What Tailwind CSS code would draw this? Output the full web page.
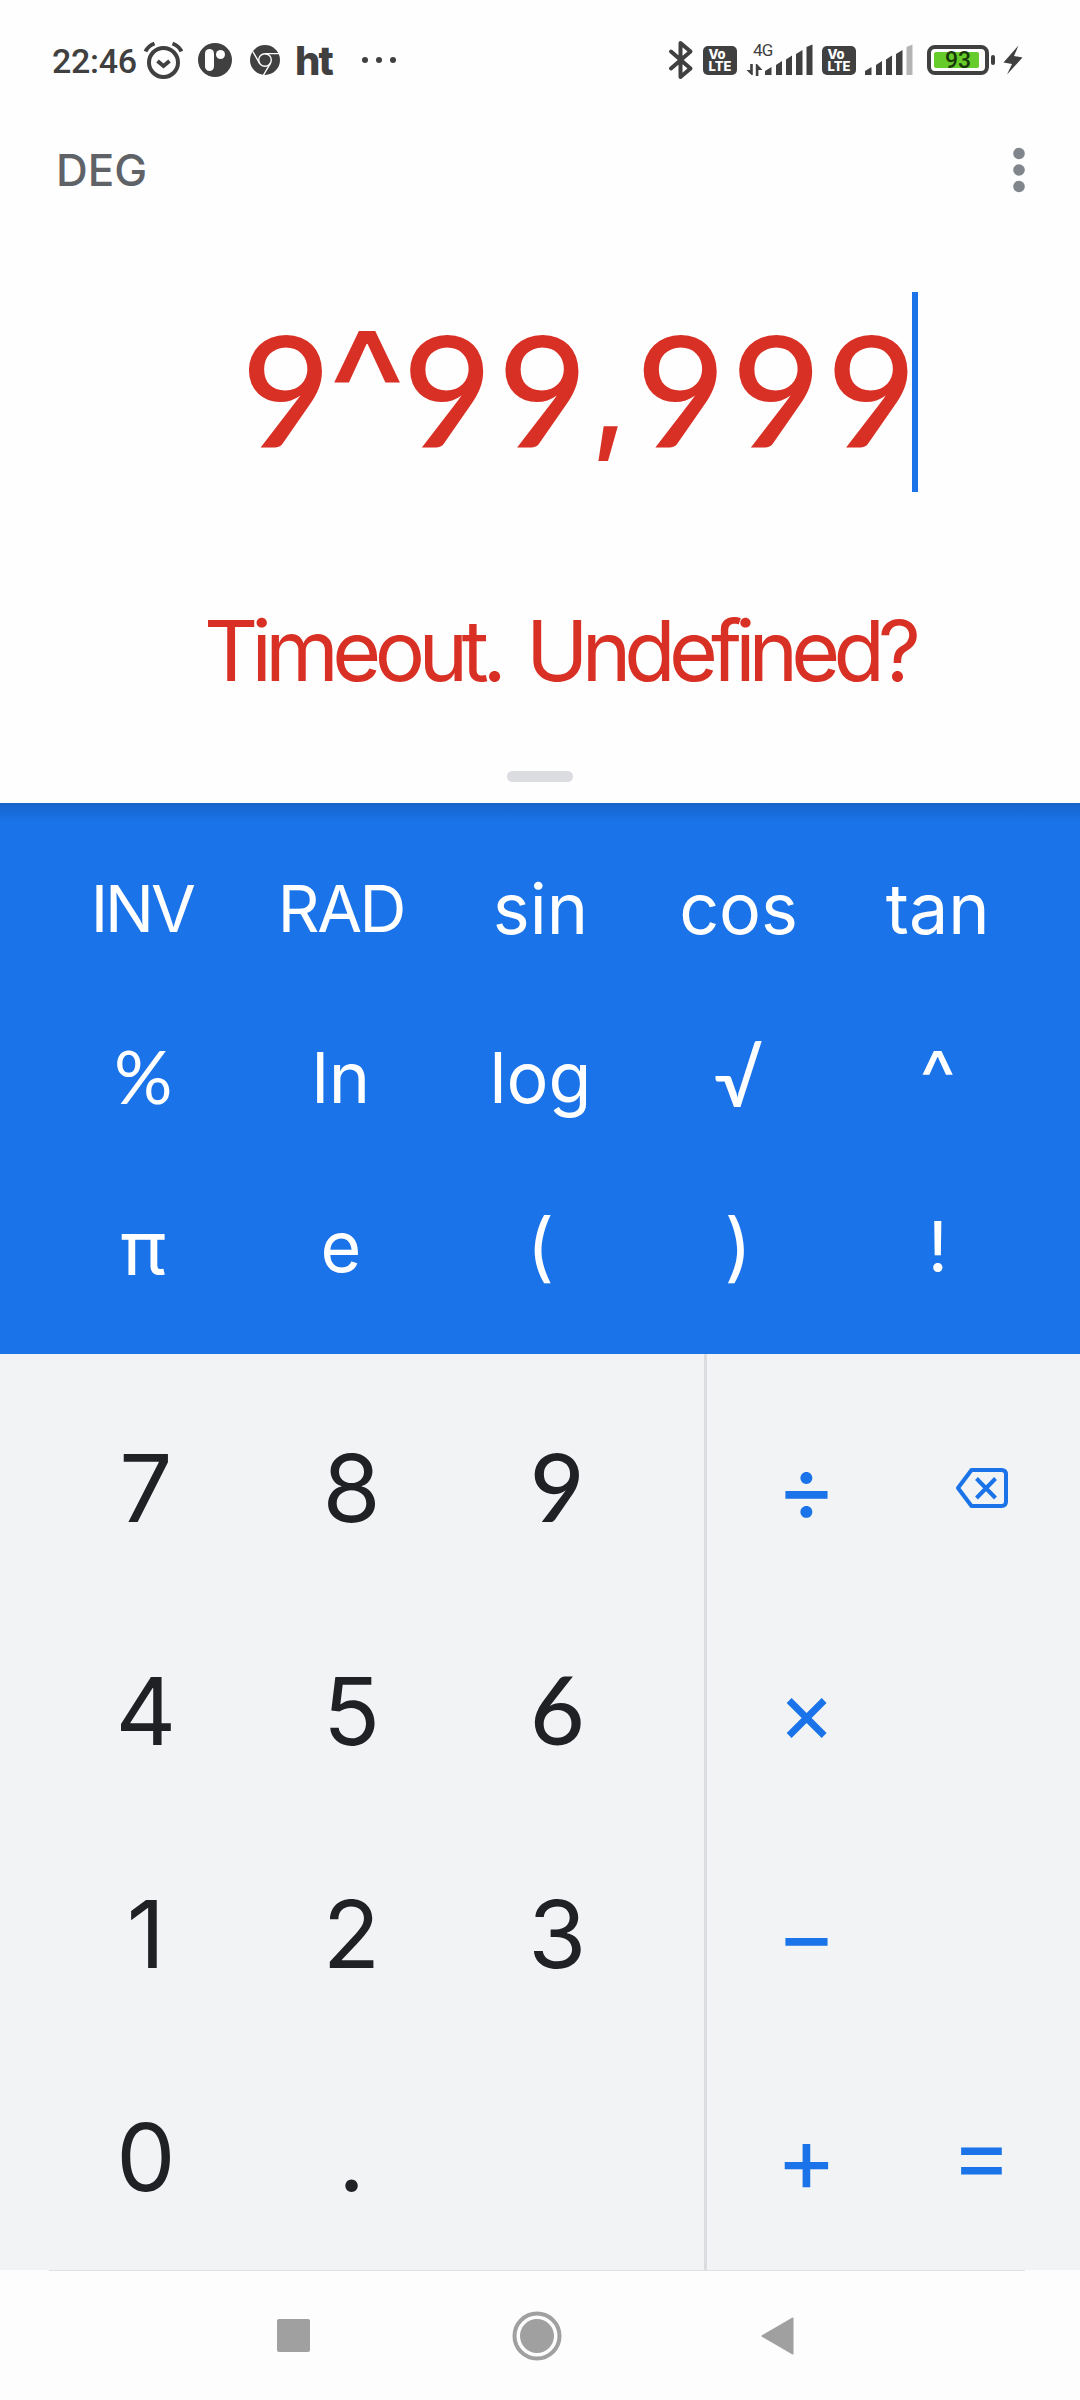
<!DOCTYPE html>
<html lang="en">
<head>
<meta charset="utf-8">
<title>Calculator</title>
<script src="https://cdn.jsdelivr.net/npm/@tailwindcss/browser@4"></script>
</head>
<body class="flex h-[2400px] w-[1080px] flex-col overflow-hidden bg-[#fefefe] font-['Inter',sans-serif] text-[#202124]">

<!-- Status bar -->
<header class="flex h-[120px] items-center justify-between pr-[57px] pl-[52px] text-[#404040]">
  <div class="flex items-center">
    <span class="w-[91px] pt-[2px] font-['Roboto',sans-serif] text-[34px] leading-[44px] font-medium tracking-[-0.3px] whitespace-nowrap">22:46</span>
    <svg class="h-[38px] w-[40px]" viewBox="0 0 40 38" fill="none" stroke="currentColor">
      <circle cx="20.5" cy="21.5" r="14.5" stroke-width="4"/>
      <path d="M14.5 20 L20.5 25 L26.500 20" stroke-width="4"/>
      <path d="M2.500 10.500 Q5 5 11.500 2.500 M38.500 10.500 Q36 5 29.500 2.500" stroke-width="4"/>
    </svg>
    <svg class="ml-[15px] h-[34px] w-[34px]" viewBox="0 0 34 34">
      <circle cx="17" cy="17" r="17" fill="currentColor"/>
      <rect x="7" y="6" width="9" height="22" rx="4.500" fill="#fefefe"/>
      <circle cx="22.500" cy="11.500" r="4.500" fill="#fefefe"/>
    </svg>
    <svg class="ml-[18px] h-[30px] w-[30px]" viewBox="0 0 30 30">
      <circle cx="15" cy="15" r="15" fill="currentColor"/>
      <g fill="none" stroke="#fefefe" stroke-width="1.400">
        <circle cx="15" cy="15" r="6.300"/>
        <path d="M15 8.600 H29 M9.500 18.200 L2.800 6.500 M20.500 18.200 L13.500 30"/>
      </g>
    </svg>
    <span class="ml-[15px] w-[40px] pt-[2px] text-[40px] leading-[44px] font-extrabold tracking-[-1.8px]">ht</span>
    <svg class="ml-[27px] h-[6px] w-[34px]" viewBox="0 0 34 6" fill="currentColor">
      <circle cx="3" cy="3" r="3"/><circle cx="17" cy="3" r="3"/><circle cx="31" cy="3" r="3"/>
    </svg>
  </div>
  <div class="flex items-center">
    <svg class="h-[40px] w-[26px]" viewBox="0 0 26 40" fill="none" stroke="currentColor" stroke-width="4" stroke-linejoin="round" stroke-linecap="round">
      <path d="M3 11.500 L22.500 28.500 L12.500 37 V3 L22.500 11.500 L3 28.500"/>
    </svg>
    <div class="ml-[9px] flex h-[29px] w-[34px] flex-col items-center justify-center rounded-[5px] bg-[#404040] text-[13px] leading-[12px] font-extrabold text-white">
      <span class="-ml-[6px]">Vo</span><span>LTE</span>
    </div>
    <div class="ml-[9px] flex h-[36px] w-[28px] flex-col items-end">
      <span class="h-[22px] w-[21px] font-['Roboto',sans-serif] text-[17px] leading-[17px] tracking-[-0.8px]">4G</span>
      <svg class="mr-[11px] h-[12px] w-[17px]" viewBox="0 0 17 12" fill="currentColor">
        <path d="M4.200 0 H6.800 V11 H5.500 L0.500 6 H4.200Z M9.800 12 H12.400 V6 H16.500 L11 0 H9.800Z"/>
      </svg>
    </div>
    <svg class="-ml-[9px] h-[32px] w-[48px]" viewBox="0 0 48 32" fill="currentColor">
      <path d="M0 31 V27 L6.500 23 V31Z M11 31 V21 L17 17 V31Z M21 31 V15.500 L27 11.500 V31Z M31 31 V10 L37.500 6 V31Z M41.500 31 V3 L47.500 0.500 V31Z"/>
    </svg>
    <div class="ml-[9px] flex h-[29px] w-[34px] flex-col items-center justify-center rounded-[5px] bg-[#404040] text-[13px] leading-[12px] font-extrabold text-white">
      <span class="-ml-[6px]">Vo</span><span>LTE</span>
    </div>
    <svg class="ml-[9px] h-[32px] w-[48px]" viewBox="0 0 48 32" fill="currentColor">
      <path d="M0 31 V27 L6.500 23 V31Z M11 31 V21 L17 17 V31Z M21 31 V15.500 L27 11.500 V31Z M31 31 V10 L37.500 6 V31Z"/>
      <path d="M41.500 31 V3 L47.500 0.500 V31Z" fill="#b4b4b4"/>
    </svg>
    <div class="ml-[14px] flex h-[30px] w-[62px] items-center rounded-[8px] border-[4px] border-[#404040] pl-[3px]">
      <span class="flex h-[16px] w-[45px] items-center justify-center rounded-[2px] bg-[#66cc2b] pt-[2px] pl-[3px] font-['Roboto',sans-serif] text-[23px] leading-[16px] font-medium text-[#183808]">93</span>
    </div>
    <span class="ml-[2px] h-[10px] w-[4px] rounded-[2px] bg-[#404040]"></span>
    <svg class="ml-[8px] h-[30px] w-[20px]" viewBox="0 0 20 30" fill="currentColor"><path d="M15.500 0.500 L0.500 17.500 L9 19 L4 29.500 L19.500 12.500 L11 11Z"/></svg>
  </div>
</header>

<!-- Display -->
<main class="flex h-[683px] flex-col">
  <div class="flex h-[98px] items-center justify-between pr-[55px] pl-[56px] pt-[1px]">
    <span class="text-[44px] font-medium text-[#5f6368]">DEG</span>
    <svg class="h-[46px] w-[12px]" viewBox="0 0 12 46" fill="#80868b"><circle cx="6" cy="6.500" r="5.800"/><circle cx="6" cy="23" r="5.800"/><circle cx="6" cy="39.500" r="5.800"/></svg>
  </div>
  <div class="mt-[74px] flex h-[200px] items-center justify-end pr-[162px] text-[#d93025]">
    <div class="flex items-baseline pt-[5px] font-['Lato',sans-serif] text-[155px] leading-[180px] font-medium tracking-[5.4px]">
      <span>9</span><span class="flex w-[66px] justify-center font-['Inter',sans-serif] text-[168px] font-normal tracking-normal"><span class="-ml-[5px] translate-y-[2px]">^</span></span><span>99</span><span class="flex w-[43px] -translate-y-[8px] justify-center pr-[10px] font-['Inter',sans-serif] text-[122px] font-medium tracking-normal">,</span><span>999</span>
    </div>
    <span class="-ml-[10px] h-[200px] w-[6px] bg-[#1a73e8]"></span>
  </div>
  <div class="mt-[109px] flex h-[100px] items-center justify-end gap-[26px] pr-[166px] text-[84px] whitespace-nowrap text-[#d93025]"><span class="tracking-[-6.600px]">Timeout.</span><span class="tracking-[-6.900px]">Undefined?</span></div>
  <div class="mx-auto mt-[70px] h-[11px] w-[66px] rounded-full bg-[#dadce0]"></div>
</main>

<!-- Scientific keys -->
<section class="h-[551px] shrink-0 bg-[#1a73e8] bg-linear-to-b from-[#1664cb] to-[#1a73e8] to-[18px] pt-[21px] text-white">
  <div class="ml-[44px] grid w-[993px] grid-cols-5 grid-rows-[repeat(3,169px)] place-items-center text-[70px]">
    <span class="pr-[3px] text-[65px] tracking-[-3px]">INV</span><span class="pr-[2px] text-[65px] tracking-[-2.500px]">RAD</span><span>sin</span><span class="pr-[1px]">cos</span><span>tan</span>
    <span class="pb-[2px] font-['Lato',sans-serif] text-[73px]">%</span><span class="pr-[2px]">ln</span><span>log</span><span class="pr-[2px] font-['Lato',sans-serif] text-[77px] font-medium">√</span><span class="text-[77px]">^</span>
    <span class="text-[76px]">π</span><span class="pr-[2px]">e</span><span class="text-[75px]">(</span><span class="pr-[2px] text-[75px]">)</span><span>!</span>
  </div>
</section>

<!-- Number pad and operators -->
<section class="flex h-[916px] shrink-0 bg-[#f1f3f4]">
  <div class="ml-[43px] grid w-[617px] grid-cols-3 grid-rows-[repeat(4,223px)] place-items-center pt-[23px] text-[94px]">
    <span>7</span><span>8</span><span class="pb-[6px] font-['Lato',sans-serif] font-medium">9</span>
    <span>4</span><span>5</span><span class="pb-[6px] font-['Lato',sans-serif] font-medium">6</span>
    <span>1</span><span>2</span><span>3</span>
    <span>0</span><span>.</span>
  </div>
  <div class="ml-[44px] w-[3px] bg-[#dadce0]"></div>
  <div class="ml-[12px] grid w-[350px] grid-cols-2 grid-rows-[repeat(4,223px)] place-items-center pt-[23px] text-[92px] text-[#1a73e8]">
    <span class="pb-[2px]">÷</span>
    <svg class="mb-[2px] h-[42px] w-[54px]" viewBox="0 0 54 42" fill="none" stroke="currentColor" stroke-width="4">
      <path d="M16.500 3 H46.500 Q51 3 51 7.500 V34.500 Q51 39 46.500 39 H16.500 L3 21Z" stroke-linejoin="round"/>
      <path d="M21.500 11.500 L40.500 31 M40.500 11.500 L21.500 31"/>
    </svg>
    <span class="pt-[2px] text-[87px]">×</span><span></span>
    <span>−</span><span></span>
    <span class="pt-[2px]">+</span><span class="pb-[8px]">=</span>
  </div>
</section>

<!-- Navigation bar -->
<nav class="flex grow flex-col bg-[#fdfdfd]">
  <div class="ml-[49px] h-[1px] w-[976px] bg-[#dfe1e3]"></div>
  <div class="flex grow items-center pl-[277px] text-[#a0a0a0]">
    <span class="h-[33px] w-[33px] rounded-[2px] bg-[#a0a0a0]"></span>
    <svg class="ml-[202px] h-[50px] w-[50px]" viewBox="0 0 50 50"><circle cx="25" cy="25" r="22.500" fill="none" stroke="currentColor" stroke-width="4"/><circle cx="25" cy="25" r="17" fill="currentColor"/></svg>
    <svg class="ml-[199px] h-[38px] w-[33px]" viewBox="0 0 33 38"><path d="M31.500 1.500 V36.500 L1.500 19Z" fill="currentColor" stroke="currentColor" stroke-width="2" stroke-linejoin="round"/></svg>
  </div>
</nav>
</body>
</html>
